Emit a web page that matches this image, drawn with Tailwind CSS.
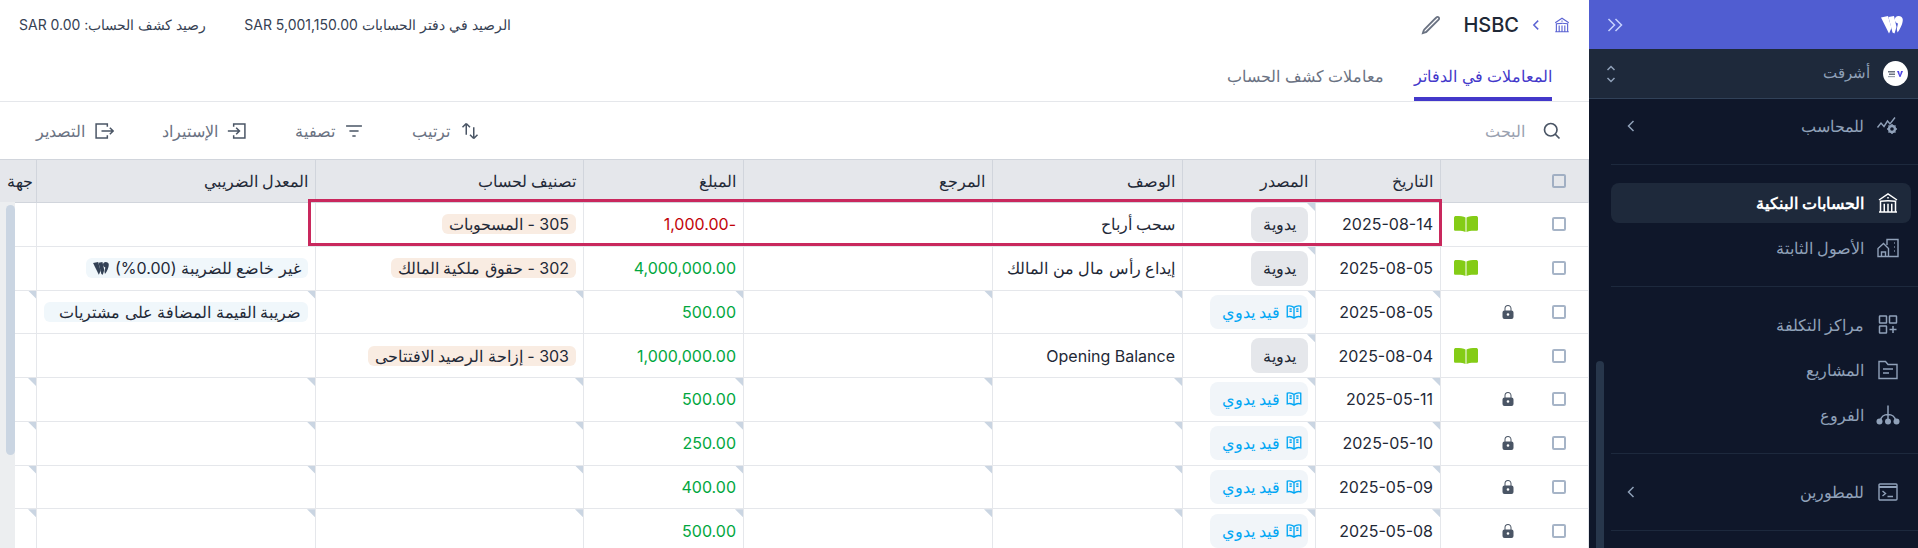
<!DOCTYPE html>
<html lang="ar" dir="rtl">
<head>
<meta charset="utf-8">
<script src="https://cdn.jsdelivr.net/npm/@tailwindcss/browser@4"></script>
</head>
<body class="overflow-hidden bg-white font-['Inter','Noto_Sans',sans-serif]">
<div class="flex h-[548px] w-[1918px] overflow-hidden">

  <!-- Sidebar -->
  <aside class="relative flex h-full w-[329px] shrink-0 flex-col overflow-hidden bg-[#0f172a]">
    <div class="flex h-[49px] shrink-0 items-center justify-between bg-[#505dd1] pr-[15px] pl-[18px]">
      <svg class="h-[18px] w-[22px]" viewBox="0 0 22 18" fill="#fff"><path d="M0 1.5 7 0l3.5 12-2.5 5.5z"/><path d="M7.5 1 13 0l2.5 11-2 6.5-2-1z"/><path d="M17.5 0c2.4 0 4.3 1.600 4.300 3.700 0 4-2.600 9.300-5.300 12.800l-.7-3.500 1.200-5.500C15.300 7 13.800 5.600 13.800 3.700 13.800 1.600 15.400 0 17.500 0z"/></svg>
      <svg class="h-4 w-4 text-indigo-200" viewBox="0 0 16 14" fill="none" stroke="currentColor" stroke-width="1.5"><path d="M1.500 1 7.500 7 1.500 13M8.500 1l6 6-6 6"/></svg>
    </div>
    <div class="flex h-[50px] shrink-0 items-center justify-between border-b border-slate-700 bg-[#1e293b] pr-[10px] pl-[17px]">
      <div class="flex items-center gap-[13px]">
        <span class="flex h-[25px] w-[25px] items-center justify-center rounded-full bg-white">
          <svg class="h-[8px] w-[16px]" viewBox="0 0 16 8"><rect x="0" y="1" width="7" height="1.500" fill="#6b7280"/><rect x="1" y="3.500" width="6" height="1.500" fill="#6b7280"/><rect x="0" y="6" width="7" height="1.200" fill="#9ca3af"/><path d="M9 1h2l1 4 1-4h2l-2.500 6h-1z" fill="#4f46e5"/></svg>
        </span>
        <span class="text-[15px] text-slate-400">أشرقت</span>
      </div>
      <svg class="h-[18px] w-[10px] text-slate-400" viewBox="0 0 10 18" fill="none" stroke="currentColor" stroke-width="1.500"><path d="M1.500 5 5 1.500 8.500 5M1.500 13 5 16.500 8.500 13"/></svg>
    </div>

    <nav class="ml-[22px] -mt-[11px] flex flex-col text-base text-slate-400">
      <div class="border-b border-slate-800 py-[18px] pr-[7px]">
        <a class="flex h-10 items-center gap-[12px] rounded-lg pr-[11px] pl-[12px]">
          <svg class="h-6 w-6 shrink-0" viewBox="0 0 24 24" fill="none" stroke="currentColor" stroke-width="1.400"><path d="M1.500 13.500 5 9l3 3.500L11.500 7l2.500 3L19 3.500"/><circle cx="16" cy="15" r="3" stroke-width="2.400"/><path d="M16 10v2M16 18v2M11 15h2M19 15h2M12.500 11.500l1.300 1.300M18.200 17.200l1.300 1.300M19.500 11.500l-1.300 1.300M13.800 17.200l-1.300 1.300"/></svg>
          <span class="flex-1">للمحاسب</span>
          <svg class="h-4 w-4" viewBox="0 0 24 24" fill="none" stroke="currentColor" stroke-width="2.200"><path d="M15.750 19.500 8.250 12l7.500-7.500"/></svg>
        </a>
      </div>
      <div class="flex flex-col gap-[5px] border-b border-slate-800 py-[18px] pr-[7px]">
        <a class="flex h-10 items-center gap-[12px] rounded-lg bg-[#1e293b] pr-[11px] font-semibold text-white">
          <svg class="h-6 w-6 shrink-0" viewBox="0 0 24 24" fill="none" stroke="currentColor" stroke-width="1.500"><path d="M12 21v-8.250M15.750 21v-8.250M8.250 21v-8.250M3 9l9-6 9 6m-1.500 12V10.332A48.360 48.360 0 0 0 12 9.750c-2.551 0-5.056.2-7.500.582V21M3 21h18M12 6.750h.008v.008H12V6.750z"/></svg>
          <span>الحسابات البنكية</span>
        </a>
        <a class="flex h-10 items-center gap-[12px] rounded-lg pr-[11px]">
          <svg class="h-6 w-6 shrink-0" viewBox="0 0 24 24" fill="none" stroke="currentColor" stroke-width="1.400"><path d="M2 20.500v-8L7.500 7.500l5 5v8zM5.500 20.500V16h4v4.500M11 9V3.500h11v17H12.500M18 7h.8M18 11h.8M18 15h.8"/></svg>
          <span>الأصول الثابتة</span>
        </a>
      </div>
      <div class="flex flex-col gap-[5px] border-b border-slate-800 py-[18px] pr-[7px]">
        <a class="flex h-10 items-center gap-[12px] rounded-lg pr-[11px]">
          <svg class="h-6 w-6 shrink-0" viewBox="0 0 24 24" fill="none" stroke="currentColor" stroke-width="1.500"><rect x="3.500" y="3" width="7" height="7" rx=".5"/><rect x="13.500" y="3" width="7" height="7" rx=".5"/><rect x="3.500" y="13" width="7" height="7" rx=".5"/><path d="M17 13v7M13.500 16.500h7"/></svg>
          <span>مراكز التكلفة</span>
        </a>
        <a class="flex h-10 items-center gap-[12px] rounded-lg pr-[11px]">
          <svg class="h-6 w-6 shrink-0" viewBox="0 0 24 24" fill="none" stroke="currentColor" stroke-width="1.400"><path d="M3 20.500V3.500h6.500l2.500 3h9v14zM7 11h10M7 15h6"/></svg>
          <span>المشاريع</span>
        </a>
        <a class="flex h-10 items-center gap-[12px] rounded-lg pr-[11px]">
          <svg class="h-6 w-6 shrink-0" viewBox="0 0 24 24" fill="none" stroke="currentColor" stroke-width="1.500"><path d="M12 2.500V18M12 11.500c-4 0-7 2.500-7.500 6M12 11.500c4 0 7 2.500 7.500 6"/><g fill="currentColor" stroke="none"><circle cx="3.500" cy="18.500" r="3"/><circle cx="12" cy="18.500" r="3"/><circle cx="20.500" cy="18.500" r="3"/></g></svg>
          <span>الفروع</span>
        </a>
      </div>
      <div class="border-b border-slate-800 py-[18px] pr-[7px]">
        <a class="flex h-10 items-center gap-[12px] rounded-lg pr-[11px] pl-[12px]">
          <svg class="h-6 w-6 shrink-0" viewBox="0 0 24 24" fill="none" stroke="currentColor" stroke-width="1.400"><rect x="3" y="4" width="18" height="16" rx="1"/><path d="M3 7h18" stroke-width="2"/><path d="M6.500 11l3 2.500-3 2.500M11.500 16.500H17"/></svg>
          <span class="flex-1">للمطورين</span>
          <svg class="h-4 w-4" viewBox="0 0 24 24" fill="none" stroke="currentColor" stroke-width="2.200"><path d="M15.750 19.500 8.250 12l7.500-7.500"/></svg>
        </a>
      </div>
    </nav>
    <div class="absolute bottom-0 left-[7px] top-[361px] w-[8px] rounded-t-md bg-[#27364b]"></div>
  </aside>

  <!-- Main -->
  <main class="flex h-full min-w-0 flex-1 flex-col">
    <div class="flex h-[49px] shrink-0 items-center justify-between pr-[18px] pl-[19px]">
      <div class="flex items-center text-[#1f2937]">
        <svg class="h-[18px] w-[18px] text-[#5b63d3]" viewBox="0 0 24 24" fill="none" stroke="currentColor" stroke-width="1.500"><path d="M12 21v-8.250M15.750 21v-8.250M8.250 21v-8.250M3 9l9-6 9 6m-1.500 12V10.332A48.360 48.360 0 0 0 12 9.750c-2.551 0-5.056.2-7.500.582V21M3 21h18M12 6.750h.008v.008H12V6.750z"/></svg>
        <svg class="mr-[10px] h-[14px] w-[14px] text-[#5b63d3]" viewBox="0 0 24 24" fill="none" stroke="currentColor" stroke-width="2.500"><path d="M15.750 19.500 8.250 12l7.500-7.500"/></svg>
        <span class="mr-[10px] text-xl font-medium">HSBC</span>
        <svg class="mr-[22px] h-[20px] w-[20px] text-gray-500" viewBox="0 0 24 24" fill="none" stroke="currentColor" stroke-width="2.200"><path d="m16.862 4.487 1.687-1.688a1.875 1.875 0 1 1 2.652 2.652L6.832 19.820a4.500 4.500 0 0 1-1.897 1.130l-2.685.8.8-2.685a4.500 4.500 0 0 1 1.130-1.897L16.863 4.487Z"/></svg>
      </div>
      <div class="flex items-center gap-[38px] text-sm text-gray-700">
        <span>الرصيد في دفتر الحسابات SAR 5,001,150.00</span>
        <span>رصيد كشف الحساب: SAR 0.00</span>
      </div>
    </div>

    <div class="flex h-[53px] shrink-0 items-end gap-[30px] border-b border-gray-200 pr-[37px] text-base">
      <div class="flex h-full items-center border-b-4 border-[#4338ca] pt-[6px] text-[#4338ca]">المعاملات في الدفاتر</div>
      <div class="flex h-full items-center pb-[4px] pt-[6px] text-gray-500">معاملات كشف الحساب</div>
    </div>

    <div class="flex h-[57px] shrink-0 items-center justify-between pr-[27px] pl-[36px] text-base text-gray-500">
      <div class="flex items-center gap-[17px]">
        <svg class="h-5 w-5 text-gray-600" viewBox="0 0 24 24" fill="none" stroke="currentColor" stroke-width="2"><path d="m21 21-5.197-5.197m0 0A7.500 7.500 0 1 0 5.196 5.196a7.500 7.500 0 0 0 10.607 10.607Z"/></svg>
        <span class="text-gray-400">البحث</span>
      </div>
      <div class="flex items-center gap-[48px]">
        <button class="flex items-center gap-[10px]">
          <svg class="h-5 w-5 text-gray-600" viewBox="0 0 24 24" fill="none" stroke="currentColor" stroke-width="1.800"><path d="M3 7.500 7.500 3m0 0L12 7.500M7.500 3v13.500m13.500 0L16.500 21m0 0L12 16.500m4.500 4.500V7.500"/></svg>
          <span>ترتيب</span>
        </button>
        <button class="flex items-center gap-[9px]">
          <svg class="h-5 w-5 text-gray-600" viewBox="0 0 24 24" fill="none" stroke="currentColor" stroke-width="1.800"><path d="M2.500 6h19M6.500 12h11M10 18h4"/></svg>
          <span>تصفية</span>
        </button>
        <button class="flex items-center gap-[9px]">
          <svg class="h-5 w-5 text-gray-600" viewBox="0 0 24 24" fill="none" stroke="currentColor" stroke-width="1.800"><path d="M8 7V3.500h13.500v17H8V17M1 12h14M11 8l4 4-4 4"/></svg>
          <span>الإستيراد</span>
        </button>
        <button class="flex items-center gap-[9px]">
          <svg class="h-5 w-5 text-gray-600" viewBox="0 0 24 24" fill="none" stroke="currentColor" stroke-width="1.800"><path d="M16 7V3.500H2.500v17H16V17M9 12h14M19 8l4 4-4 4"/></svg>
          <span>التصدير</span>
        </button>
      </div>
    </div>

    <div class="relative flex-1">
      <table class="w-full table-fixed border-collapse text-base text-[#1f2937]">
        <colgroup>
          <col class="w-[148px]"><col class="w-[125px]"><col class="w-[133px]"><col class="w-[190px]"><col class="w-[249px]"><col class="w-[160px]"><col class="w-[268px]"><col class="w-[279px]"><col class="w-[37px]">
        </colgroup>
        <thead>
          <tr class="h-[43px] border-y border-gray-300 bg-gray-200 text-right font-medium [&>th]:border-x [&>th]:border-gray-300 [&>th]:px-[7px] [&>th]:font-normal">
            <th><span class="mr-[15px] block h-[14px] w-[14px] rounded-[2px] border-2 border-slate-400/80"></span></th>
            <th>التاريخ</th><th>المصدر</th><th>الوصف</th><th>المرجع</th><th>المبلغ</th><th>تصنيف لحساب</th><th>المعدل الضريبي</th><th class="!px-[3px]">جهة</th>
          </tr>
        </thead>
        <tbody class="[&>tr]:h-[43.75px] [&>tr]:border-b [&>tr]:border-gray-200 [&_td]:relative [&_td]:border-x [&_td]:border-gray-200 [&_td]:px-[7px] [&_td]:whitespace-nowrap">
          <tr>
            <td><div class="flex items-center pr-[15px]"><span class="block h-[14px] w-[14px] rounded-[2px] border-2 border-slate-400/80"></span><svg class="mr-[74px] h-4 w-6 text-[#84cc16]" viewBox="0 0 24 16" fill="currentColor"><path d="M0 2c0-1.500 1-2 2-2 4 0 7.500 0 9.500 1.500V16C9.500 14.800 5 14.500 1.500 14.800.6 14.800 0 14.200 0 13.500zM24 2c0-1.500-1-2-2-2-4 0-7.500 0-9.500 1.500V16c2-1.200 6.500-1.500 10-1.200.9 0 1.500-.6 1.500-1.300z"/></svg></div></td>
            <td>2025-08-14</td>
            <td><i class="absolute right-0 top-0 h-2 w-2 bg-slate-300 [clip-path:polygon(0_0,100%_0,100%_100%)]"></i><span class="inline-flex h-[35px] items-center rounded-lg bg-gray-200 px-3">يدوية</span></td>
            <td>سحب أرباح</td><td></td>
            <td class="text-red-700">-1,000.00</td>
            <td><span class="inline-flex h-5 items-center rounded-md bg-[#f9ece2] px-[7px]">305 - المسحوبات</span></td>
            <td></td><td></td>
          </tr>
          <tr>
            <td><div class="flex items-center pr-[15px]"><span class="block h-[14px] w-[14px] rounded-[2px] border-2 border-slate-400/80"></span><svg class="mr-[74px] h-4 w-6 text-[#84cc16]" viewBox="0 0 24 16" fill="currentColor"><path d="M0 2c0-1.500 1-2 2-2 4 0 7.500 0 9.500 1.500V16C9.500 14.800 5 14.500 1.500 14.800.6 14.800 0 14.200 0 13.500zM24 2c0-1.500-1-2-2-2-4 0-7.500 0-9.500 1.500V16c2-1.200 6.500-1.500 10-1.200.9 0 1.500-.6 1.500-1.300z"/></svg></div></td>
            <td>2025-08-05</td>
            <td><i class="absolute right-0 top-0 h-2 w-2 bg-slate-300 [clip-path:polygon(0_0,100%_0,100%_100%)]"></i><span class="inline-flex h-[35px] items-center rounded-lg bg-gray-200 px-3">يدوية</span></td>
            <td>إيداع رأس مال من المالك</td><td></td>
            <td class="text-green-600">4,000,000.00</td>
            <td><span class="inline-flex h-5 items-center rounded-md bg-[#f9ece2] px-[7px]">302 - حقوق ملكية المالك</span></td>
            <td><span class="inline-flex h-5 items-center gap-[6px] rounded-md bg-[#f0f7fb] px-[7px]">غير خاضع للضريبة (0.00%)<svg class="h-[13px] w-[16px]" viewBox="0 0 22 18" fill="#334155"><path d="M0 1.500 7 0l3.500 12-2.500 5.500z"/><path d="M7.500 1 13 0l2.500 11-2 6.500-2-1z"/><path d="M17.500 0c2.400 0 4.300 1.600 4.300 3.700 0 4-2.600 9.300-5.300 12.800l-.7-3.500 1.200-5.500C15.300 7 13.800 5.600 13.800 3.700 13.800 1.600 15.400 0 17.500 0z"/></svg></span></td>
            <td></td>
          </tr>
          <tr>
            <td><div class="flex items-center pr-[15px]"><span class="block h-[14px] w-[14px] rounded-[2px] border-2 border-slate-400/80"></span><svg class="mr-[36px] h-4 w-4 text-gray-600" viewBox="0 0 24 24" fill="currentColor"><path fill-rule="evenodd" d="M12 1.500a5.250 5.250 0 0 0-5.250 5.250v3a3 3 0 0 0-3 3v6.750a3 3 0 0 0 3 3h10.500a3 3 0 0 0 3-3v-6.750a3 3 0 0 0-3-3v-3c0-2.900-2.350-5.250-5.250-5.250Zm3.750 8.250v-3a3.750 3.750 0 1 0-7.500 0v3h7.500Zm-3.750 4a2 2 0 1 0 0 4 2 2 0 0 0 0-4Z"/></svg></div></td>
            <td><i class="absolute right-0 top-0 h-2 w-2 bg-slate-300 [clip-path:polygon(0_0,100%_0,100%_100%)]"></i>2025-08-05</td>
            <td><i class="absolute right-0 top-0 h-2 w-2 bg-slate-300 [clip-path:polygon(0_0,100%_0,100%_100%)]"></i><span class="inline-flex h-[34px] items-center gap-[5px] rounded-lg bg-slate-100 px-[5px] pl-3 text-sky-500"><svg class="h-[18px] w-[18px]" viewBox="0 0 24 24" fill="none" stroke="currentColor" stroke-width="1.800"><path d="M12 6.042A8.967 8.967 0 0 0 6 3.750c-1.052 0-2.062.18-3 .512v14.250A8.987 8.987 0 0 1 6 18c2.305 0 4.408.867 6 2.292m0-14.250a8.966 8.966 0 0 1 6-2.292c1.052 0 2.062.18 3 .512v14.250A8.987 8.987 0 0 0 18 18a8.967 8.967 0 0 0-6 2.292m0-14.250v14.250M6 8h3M6 11h3M15 8h3M15 11h3"/></svg>قيد يدوي</span></td>
            <td><i class="absolute right-0 top-0 h-2 w-2 bg-slate-300 [clip-path:polygon(0_0,100%_0,100%_100%)]"></i></td>
            <td><i class="absolute right-0 top-0 h-2 w-2 bg-slate-300 [clip-path:polygon(0_0,100%_0,100%_100%)]"></i></td>
            <td class="text-green-600"><i class="absolute right-0 top-0 h-2 w-2 bg-slate-300 [clip-path:polygon(0_0,100%_0,100%_100%)]"></i>500.00</td>
            <td><i class="absolute right-0 top-0 h-2 w-2 bg-slate-300 [clip-path:polygon(0_0,100%_0,100%_100%)]"></i></td>
            <td><i class="absolute right-0 top-0 h-2 w-2 bg-slate-300 [clip-path:polygon(0_0,100%_0,100%_100%)]"></i><span class="flex h-5 items-center overflow-hidden rounded-md bg-[#f0f7fb] pr-[7px]"><span class="shrink-0">ضريبة القيمة المضافة على مشتريات</span></span></td>
            <td><i class="absolute right-0 top-0 h-2 w-2 bg-slate-300 [clip-path:polygon(0_0,100%_0,100%_100%)]"></i></td>
          </tr>
          <tr>
            <td><div class="flex items-center pr-[15px]"><span class="block h-[14px] w-[14px] rounded-[2px] border-2 border-slate-400/80"></span><svg class="mr-[74px] h-4 w-6 text-[#84cc16]" viewBox="0 0 24 16" fill="currentColor"><path d="M0 2c0-1.500 1-2 2-2 4 0 7.500 0 9.500 1.500V16C9.500 14.800 5 14.500 1.500 14.800.6 14.800 0 14.200 0 13.500zM24 2c0-1.500-1-2-2-2-4 0-7.500 0-9.500 1.500V16c2-1.200 6.500-1.500 10-1.200.9 0 1.500-.6 1.500-1.300z"/></svg></div></td>
            <td>2025-08-04</td>
            <td><i class="absolute right-0 top-0 h-2 w-2 bg-slate-300 [clip-path:polygon(0_0,100%_0,100%_100%)]"></i><span class="inline-flex h-[35px] items-center rounded-lg bg-gray-200 px-3">يدوية</span></td>
            <td>Opening Balance</td><td></td>
            <td class="text-green-600">1,000,000.00</td>
            <td><span class="inline-flex h-5 items-center rounded-md bg-[#f9ece2] px-[7px]">303 - إزاحة الرصيد الافتتاحى</span></td>
            <td></td><td></td>
          </tr>
          <tr>
            <td><div class="flex items-center pr-[15px]"><span class="block h-[14px] w-[14px] rounded-[2px] border-2 border-slate-400/80"></span><svg class="mr-[36px] h-4 w-4 text-gray-600" viewBox="0 0 24 24" fill="currentColor"><path fill-rule="evenodd" d="M12 1.500a5.250 5.250 0 0 0-5.250 5.250v3a3 3 0 0 0-3 3v6.750a3 3 0 0 0 3 3h10.500a3 3 0 0 0 3-3v-6.750a3 3 0 0 0-3-3v-3c0-2.900-2.350-5.250-5.250-5.250Zm3.750 8.250v-3a3.750 3.750 0 1 0-7.500 0v3h7.500Zm-3.750 4a2 2 0 1 0 0 4 2 2 0 0 0 0-4Z"/></svg></div></td>
            <td><i class="absolute right-0 top-0 h-2 w-2 bg-slate-300 [clip-path:polygon(0_0,100%_0,100%_100%)]"></i>2025-05-11</td>
            <td><i class="absolute right-0 top-0 h-2 w-2 bg-slate-300 [clip-path:polygon(0_0,100%_0,100%_100%)]"></i><span class="inline-flex h-[34px] items-center gap-[5px] rounded-lg bg-slate-100 px-[5px] pl-3 text-sky-500"><svg class="h-[18px] w-[18px]" viewBox="0 0 24 24" fill="none" stroke="currentColor" stroke-width="1.800"><path d="M12 6.042A8.967 8.967 0 0 0 6 3.750c-1.052 0-2.062.18-3 .512v14.250A8.987 8.987 0 0 1 6 18c2.305 0 4.408.867 6 2.292m0-14.250a8.966 8.966 0 0 1 6-2.292c1.052 0 2.062.18 3 .512v14.250A8.987 8.987 0 0 0 18 18a8.967 8.967 0 0 0-6 2.292m0-14.250v14.250M6 8h3M6 11h3M15 8h3M15 11h3"/></svg>قيد يدوي</span></td>
            <td><i class="absolute right-0 top-0 h-2 w-2 bg-slate-300 [clip-path:polygon(0_0,100%_0,100%_100%)]"></i></td>
            <td><i class="absolute right-0 top-0 h-2 w-2 bg-slate-300 [clip-path:polygon(0_0,100%_0,100%_100%)]"></i></td>
            <td class="text-green-600"><i class="absolute right-0 top-0 h-2 w-2 bg-slate-300 [clip-path:polygon(0_0,100%_0,100%_100%)]"></i>500.00</td>
            <td><i class="absolute right-0 top-0 h-2 w-2 bg-slate-300 [clip-path:polygon(0_0,100%_0,100%_100%)]"></i></td>
            <td><i class="absolute right-0 top-0 h-2 w-2 bg-slate-300 [clip-path:polygon(0_0,100%_0,100%_100%)]"></i></td>
            <td><i class="absolute right-0 top-0 h-2 w-2 bg-slate-300 [clip-path:polygon(0_0,100%_0,100%_100%)]"></i></td>
          </tr>
          <tr>
            <td><div class="flex items-center pr-[15px]"><span class="block h-[14px] w-[14px] rounded-[2px] border-2 border-slate-400/80"></span><svg class="mr-[36px] h-4 w-4 text-gray-600" viewBox="0 0 24 24" fill="currentColor"><path fill-rule="evenodd" d="M12 1.500a5.250 5.250 0 0 0-5.250 5.250v3a3 3 0 0 0-3 3v6.750a3 3 0 0 0 3 3h10.500a3 3 0 0 0 3-3v-6.750a3 3 0 0 0-3-3v-3c0-2.900-2.350-5.250-5.250-5.250Zm3.750 8.250v-3a3.750 3.750 0 1 0-7.500 0v3h7.500Zm-3.750 4a2 2 0 1 0 0 4 2 2 0 0 0 0-4Z"/></svg></div></td>
            <td><i class="absolute right-0 top-0 h-2 w-2 bg-slate-300 [clip-path:polygon(0_0,100%_0,100%_100%)]"></i>2025-05-10</td>
            <td><i class="absolute right-0 top-0 h-2 w-2 bg-slate-300 [clip-path:polygon(0_0,100%_0,100%_100%)]"></i><span class="inline-flex h-[34px] items-center gap-[5px] rounded-lg bg-slate-100 px-[5px] pl-3 text-sky-500"><svg class="h-[18px] w-[18px]" viewBox="0 0 24 24" fill="none" stroke="currentColor" stroke-width="1.800"><path d="M12 6.042A8.967 8.967 0 0 0 6 3.750c-1.052 0-2.062.18-3 .512v14.250A8.987 8.987 0 0 1 6 18c2.305 0 4.408.867 6 2.292m0-14.250a8.966 8.966 0 0 1 6-2.292c1.052 0 2.062.18 3 .512v14.250A8.987 8.987 0 0 0 18 18a8.967 8.967 0 0 0-6 2.292m0-14.250v14.250M6 8h3M6 11h3M15 8h3M15 11h3"/></svg>قيد يدوي</span></td>
            <td><i class="absolute right-0 top-0 h-2 w-2 bg-slate-300 [clip-path:polygon(0_0,100%_0,100%_100%)]"></i></td>
            <td><i class="absolute right-0 top-0 h-2 w-2 bg-slate-300 [clip-path:polygon(0_0,100%_0,100%_100%)]"></i></td>
            <td class="text-green-600"><i class="absolute right-0 top-0 h-2 w-2 bg-slate-300 [clip-path:polygon(0_0,100%_0,100%_100%)]"></i>250.00</td>
            <td><i class="absolute right-0 top-0 h-2 w-2 bg-slate-300 [clip-path:polygon(0_0,100%_0,100%_100%)]"></i></td>
            <td><i class="absolute right-0 top-0 h-2 w-2 bg-slate-300 [clip-path:polygon(0_0,100%_0,100%_100%)]"></i></td>
            <td><i class="absolute right-0 top-0 h-2 w-2 bg-slate-300 [clip-path:polygon(0_0,100%_0,100%_100%)]"></i></td>
          </tr>
          <tr>
            <td><div class="flex items-center pr-[15px]"><span class="block h-[14px] w-[14px] rounded-[2px] border-2 border-slate-400/80"></span><svg class="mr-[36px] h-4 w-4 text-gray-600" viewBox="0 0 24 24" fill="currentColor"><path fill-rule="evenodd" d="M12 1.500a5.250 5.250 0 0 0-5.250 5.250v3a3 3 0 0 0-3 3v6.750a3 3 0 0 0 3 3h10.500a3 3 0 0 0 3-3v-6.750a3 3 0 0 0-3-3v-3c0-2.900-2.350-5.250-5.250-5.250Zm3.750 8.250v-3a3.750 3.750 0 1 0-7.500 0v3h7.500Zm-3.750 4a2 2 0 1 0 0 4 2 2 0 0 0 0-4Z"/></svg></div></td>
            <td><i class="absolute right-0 top-0 h-2 w-2 bg-slate-300 [clip-path:polygon(0_0,100%_0,100%_100%)]"></i>2025-05-09</td>
            <td><i class="absolute right-0 top-0 h-2 w-2 bg-slate-300 [clip-path:polygon(0_0,100%_0,100%_100%)]"></i><span class="inline-flex h-[34px] items-center gap-[5px] rounded-lg bg-slate-100 px-[5px] pl-3 text-sky-500"><svg class="h-[18px] w-[18px]" viewBox="0 0 24 24" fill="none" stroke="currentColor" stroke-width="1.800"><path d="M12 6.042A8.967 8.967 0 0 0 6 3.750c-1.052 0-2.062.18-3 .512v14.250A8.987 8.987 0 0 1 6 18c2.305 0 4.408.867 6 2.292m0-14.250a8.966 8.966 0 0 1 6-2.292c1.052 0 2.062.18 3 .512v14.250A8.987 8.987 0 0 0 18 18a8.967 8.967 0 0 0-6 2.292m0-14.250v14.250M6 8h3M6 11h3M15 8h3M15 11h3"/></svg>قيد يدوي</span></td>
            <td><i class="absolute right-0 top-0 h-2 w-2 bg-slate-300 [clip-path:polygon(0_0,100%_0,100%_100%)]"></i></td>
            <td><i class="absolute right-0 top-0 h-2 w-2 bg-slate-300 [clip-path:polygon(0_0,100%_0,100%_100%)]"></i></td>
            <td class="text-green-600"><i class="absolute right-0 top-0 h-2 w-2 bg-slate-300 [clip-path:polygon(0_0,100%_0,100%_100%)]"></i>400.00</td>
            <td><i class="absolute right-0 top-0 h-2 w-2 bg-slate-300 [clip-path:polygon(0_0,100%_0,100%_100%)]"></i></td>
            <td><i class="absolute right-0 top-0 h-2 w-2 bg-slate-300 [clip-path:polygon(0_0,100%_0,100%_100%)]"></i></td>
            <td><i class="absolute right-0 top-0 h-2 w-2 bg-slate-300 [clip-path:polygon(0_0,100%_0,100%_100%)]"></i></td>
          </tr>
          <tr>
            <td><div class="flex items-center pr-[15px]"><span class="block h-[14px] w-[14px] rounded-[2px] border-2 border-slate-400/80"></span><svg class="mr-[36px] h-4 w-4 text-gray-600" viewBox="0 0 24 24" fill="currentColor"><path fill-rule="evenodd" d="M12 1.500a5.250 5.250 0 0 0-5.250 5.250v3a3 3 0 0 0-3 3v6.750a3 3 0 0 0 3 3h10.500a3 3 0 0 0 3-3v-6.750a3 3 0 0 0-3-3v-3c0-2.900-2.350-5.250-5.250-5.250Zm3.750 8.250v-3a3.750 3.750 0 1 0-7.500 0v3h7.500Zm-3.750 4a2 2 0 1 0 0 4 2 2 0 0 0 0-4Z"/></svg></div></td>
            <td><i class="absolute right-0 top-0 h-2 w-2 bg-slate-300 [clip-path:polygon(0_0,100%_0,100%_100%)]"></i>2025-05-08</td>
            <td><i class="absolute right-0 top-0 h-2 w-2 bg-slate-300 [clip-path:polygon(0_0,100%_0,100%_100%)]"></i><span class="inline-flex h-[34px] items-center gap-[5px] rounded-lg bg-slate-100 px-[5px] pl-3 text-sky-500"><svg class="h-[18px] w-[18px]" viewBox="0 0 24 24" fill="none" stroke="currentColor" stroke-width="1.800"><path d="M12 6.042A8.967 8.967 0 0 0 6 3.750c-1.052 0-2.062.18-3 .512v14.250A8.987 8.987 0 0 1 6 18c2.305 0 4.408.867 6 2.292m0-14.250a8.966 8.966 0 0 1 6-2.292c1.052 0 2.062.18 3 .512v14.250A8.987 8.987 0 0 0 18 18a8.967 8.967 0 0 0-6 2.292m0-14.250v14.250M6 8h3M6 11h3M15 8h3M15 11h3"/></svg>قيد يدوي</span></td>
            <td><i class="absolute right-0 top-0 h-2 w-2 bg-slate-300 [clip-path:polygon(0_0,100%_0,100%_100%)]"></i></td>
            <td><i class="absolute right-0 top-0 h-2 w-2 bg-slate-300 [clip-path:polygon(0_0,100%_0,100%_100%)]"></i></td>
            <td class="text-green-600"><i class="absolute right-0 top-0 h-2 w-2 bg-slate-300 [clip-path:polygon(0_0,100%_0,100%_100%)]"></i>500.00</td>
            <td><i class="absolute right-0 top-0 h-2 w-2 bg-slate-300 [clip-path:polygon(0_0,100%_0,100%_100%)]"></i></td>
            <td><i class="absolute right-0 top-0 h-2 w-2 bg-slate-300 [clip-path:polygon(0_0,100%_0,100%_100%)]"></i></td>
            <td><i class="absolute right-0 top-0 h-2 w-2 bg-slate-300 [clip-path:polygon(0_0,100%_0,100%_100%)]"></i></td>
          </tr>
        </tbody>
      </table>
      <!-- table scrollbar -->
      <div class="absolute bottom-0 left-0 top-[43px] w-[15px] bg-[#eceef0]">
        <div class="ml-[3px] mt-[3px] h-[250px] w-[9px] rounded-md bg-slate-300"></div>
      </div>
      <!-- highlight annotation -->
      <div class="absolute left-[308px] top-[40px] h-[47px] w-[1134px] border-[3px] border-[#c9285d]"></div>
    </div>
  </main>
</div>
</body>
</html>
